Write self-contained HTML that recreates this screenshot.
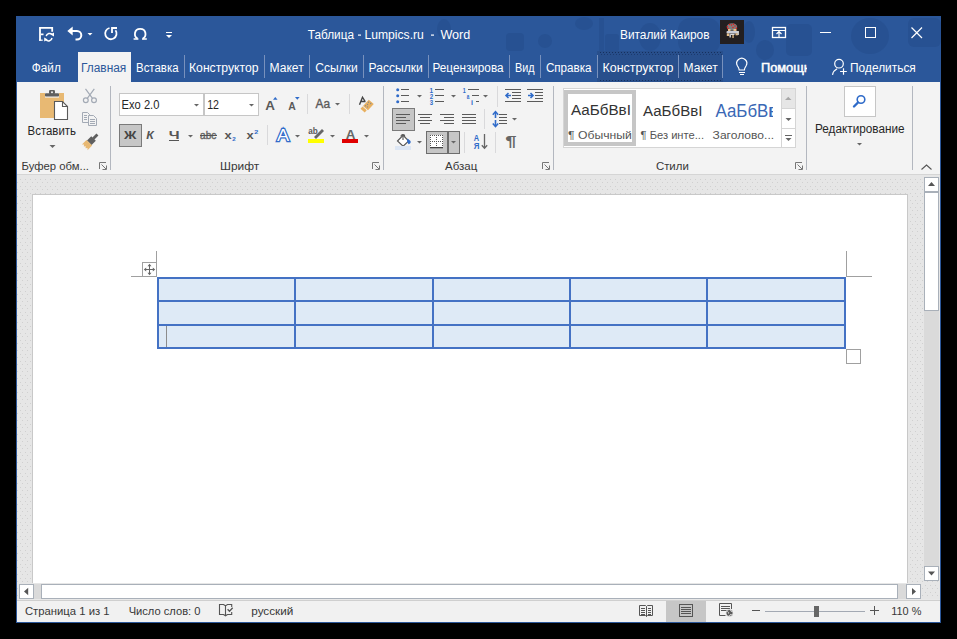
<!DOCTYPE html>
<html><head><meta charset="utf-8"><style>
html,body{margin:0;padding:0;background:#000;width:957px;height:639px;overflow:hidden}
svg{display:block;font-family:"Liberation Sans",sans-serif}
</style></head><body>
<svg width="957" height="639" viewBox="0 0 957 639">
<rect x="0" y="0" width="957" height="639" fill="#000" />
<rect x="16" y="16" width="925" height="607" fill="#2b579a" />
<g fill="#1f4580" opacity="0.3"><ellipse cx="584" cy="23.5" rx="9" ry="6.5"/><ellipse cx="444" cy="29" rx="7" ry="10"/><rect x="506" y="33" width="18" height="18" rx="4"/><circle cx="545" cy="41" r="7"/><rect x="599" y="18" width="5" height="34"/><rect x="605" y="34" width="14" height="18" rx="3"/><ellipse cx="650" cy="37" rx="11" ry="14"/><rect x="678" y="18" width="42" height="36" rx="12"/><ellipse cx="749" cy="32" rx="6" ry="11"/><ellipse cx="765" cy="50" rx="9" ry="10"/><rect x="786" y="24" width="26" height="32" rx="5"/><ellipse cx="870" cy="36" rx="19" ry="18"/><rect x="908" y="18" width="33" height="29" rx="6"/></g>
<rect x="597" y="51" width="126" height="31" fill="#284f8c" />
<rect x="600" y="52" width="1" height="1" fill="#15305e" />
<rect x="601" y="54" width="1" height="1" fill="#1c3a6e" />
<rect x="600" y="80" width="1" height="1" fill="#15305e" />
<rect x="603" y="52" width="1" height="1" fill="#15305e" />
<rect x="604" y="54" width="1" height="1" fill="#1c3a6e" />
<rect x="603" y="80" width="1" height="1" fill="#15305e" />
<rect x="606" y="52" width="1" height="1" fill="#15305e" />
<rect x="607" y="54" width="1" height="1" fill="#1c3a6e" />
<rect x="606" y="80" width="1" height="1" fill="#15305e" />
<rect x="609" y="52" width="1" height="1" fill="#15305e" />
<rect x="610" y="54" width="1" height="1" fill="#1c3a6e" />
<rect x="609" y="80" width="1" height="1" fill="#15305e" />
<rect x="612" y="52" width="1" height="1" fill="#15305e" />
<rect x="613" y="54" width="1" height="1" fill="#1c3a6e" />
<rect x="612" y="80" width="1" height="1" fill="#15305e" />
<rect x="615" y="52" width="1" height="1" fill="#15305e" />
<rect x="616" y="54" width="1" height="1" fill="#1c3a6e" />
<rect x="615" y="80" width="1" height="1" fill="#15305e" />
<rect x="618" y="52" width="1" height="1" fill="#15305e" />
<rect x="619" y="54" width="1" height="1" fill="#1c3a6e" />
<rect x="618" y="80" width="1" height="1" fill="#15305e" />
<rect x="621" y="52" width="1" height="1" fill="#15305e" />
<rect x="622" y="54" width="1" height="1" fill="#1c3a6e" />
<rect x="621" y="80" width="1" height="1" fill="#15305e" />
<rect x="624" y="52" width="1" height="1" fill="#15305e" />
<rect x="625" y="54" width="1" height="1" fill="#1c3a6e" />
<rect x="624" y="80" width="1" height="1" fill="#15305e" />
<rect x="627" y="52" width="1" height="1" fill="#15305e" />
<rect x="628" y="54" width="1" height="1" fill="#1c3a6e" />
<rect x="627" y="80" width="1" height="1" fill="#15305e" />
<rect x="630" y="52" width="1" height="1" fill="#15305e" />
<rect x="631" y="54" width="1" height="1" fill="#1c3a6e" />
<rect x="630" y="80" width="1" height="1" fill="#15305e" />
<rect x="633" y="52" width="1" height="1" fill="#15305e" />
<rect x="634" y="54" width="1" height="1" fill="#1c3a6e" />
<rect x="633" y="80" width="1" height="1" fill="#15305e" />
<rect x="636" y="52" width="1" height="1" fill="#15305e" />
<rect x="637" y="54" width="1" height="1" fill="#1c3a6e" />
<rect x="636" y="80" width="1" height="1" fill="#15305e" />
<rect x="639" y="52" width="1" height="1" fill="#15305e" />
<rect x="640" y="54" width="1" height="1" fill="#1c3a6e" />
<rect x="639" y="80" width="1" height="1" fill="#15305e" />
<rect x="642" y="52" width="1" height="1" fill="#15305e" />
<rect x="643" y="54" width="1" height="1" fill="#1c3a6e" />
<rect x="642" y="80" width="1" height="1" fill="#15305e" />
<rect x="645" y="52" width="1" height="1" fill="#15305e" />
<rect x="646" y="54" width="1" height="1" fill="#1c3a6e" />
<rect x="645" y="80" width="1" height="1" fill="#15305e" />
<rect x="648" y="52" width="1" height="1" fill="#15305e" />
<rect x="649" y="54" width="1" height="1" fill="#1c3a6e" />
<rect x="648" y="80" width="1" height="1" fill="#15305e" />
<rect x="651" y="52" width="1" height="1" fill="#15305e" />
<rect x="652" y="54" width="1" height="1" fill="#1c3a6e" />
<rect x="651" y="80" width="1" height="1" fill="#15305e" />
<rect x="654" y="52" width="1" height="1" fill="#15305e" />
<rect x="655" y="54" width="1" height="1" fill="#1c3a6e" />
<rect x="654" y="80" width="1" height="1" fill="#15305e" />
<rect x="657" y="52" width="1" height="1" fill="#15305e" />
<rect x="658" y="54" width="1" height="1" fill="#1c3a6e" />
<rect x="657" y="80" width="1" height="1" fill="#15305e" />
<rect x="660" y="52" width="1" height="1" fill="#15305e" />
<rect x="661" y="54" width="1" height="1" fill="#1c3a6e" />
<rect x="660" y="80" width="1" height="1" fill="#15305e" />
<rect x="663" y="52" width="1" height="1" fill="#15305e" />
<rect x="664" y="54" width="1" height="1" fill="#1c3a6e" />
<rect x="663" y="80" width="1" height="1" fill="#15305e" />
<rect x="666" y="52" width="1" height="1" fill="#15305e" />
<rect x="667" y="54" width="1" height="1" fill="#1c3a6e" />
<rect x="666" y="80" width="1" height="1" fill="#15305e" />
<rect x="669" y="52" width="1" height="1" fill="#15305e" />
<rect x="670" y="54" width="1" height="1" fill="#1c3a6e" />
<rect x="669" y="80" width="1" height="1" fill="#15305e" />
<rect x="672" y="52" width="1" height="1" fill="#15305e" />
<rect x="673" y="54" width="1" height="1" fill="#1c3a6e" />
<rect x="672" y="80" width="1" height="1" fill="#15305e" />
<rect x="675" y="52" width="1" height="1" fill="#15305e" />
<rect x="676" y="54" width="1" height="1" fill="#1c3a6e" />
<rect x="675" y="80" width="1" height="1" fill="#15305e" />
<rect x="678" y="52" width="1" height="1" fill="#15305e" />
<rect x="679" y="54" width="1" height="1" fill="#1c3a6e" />
<rect x="678" y="80" width="1" height="1" fill="#15305e" />
<rect x="681" y="52" width="1" height="1" fill="#15305e" />
<rect x="682" y="54" width="1" height="1" fill="#1c3a6e" />
<rect x="681" y="80" width="1" height="1" fill="#15305e" />
<rect x="684" y="52" width="1" height="1" fill="#15305e" />
<rect x="685" y="54" width="1" height="1" fill="#1c3a6e" />
<rect x="684" y="80" width="1" height="1" fill="#15305e" />
<rect x="687" y="52" width="1" height="1" fill="#15305e" />
<rect x="688" y="54" width="1" height="1" fill="#1c3a6e" />
<rect x="687" y="80" width="1" height="1" fill="#15305e" />
<rect x="690" y="52" width="1" height="1" fill="#15305e" />
<rect x="691" y="54" width="1" height="1" fill="#1c3a6e" />
<rect x="690" y="80" width="1" height="1" fill="#15305e" />
<rect x="693" y="52" width="1" height="1" fill="#15305e" />
<rect x="694" y="54" width="1" height="1" fill="#1c3a6e" />
<rect x="693" y="80" width="1" height="1" fill="#15305e" />
<rect x="696" y="52" width="1" height="1" fill="#15305e" />
<rect x="697" y="54" width="1" height="1" fill="#1c3a6e" />
<rect x="696" y="80" width="1" height="1" fill="#15305e" />
<rect x="699" y="52" width="1" height="1" fill="#15305e" />
<rect x="700" y="54" width="1" height="1" fill="#1c3a6e" />
<rect x="699" y="80" width="1" height="1" fill="#15305e" />
<rect x="702" y="52" width="1" height="1" fill="#15305e" />
<rect x="703" y="54" width="1" height="1" fill="#1c3a6e" />
<rect x="702" y="80" width="1" height="1" fill="#15305e" />
<rect x="705" y="52" width="1" height="1" fill="#15305e" />
<rect x="706" y="54" width="1" height="1" fill="#1c3a6e" />
<rect x="705" y="80" width="1" height="1" fill="#15305e" />
<rect x="708" y="52" width="1" height="1" fill="#15305e" />
<rect x="709" y="54" width="1" height="1" fill="#1c3a6e" />
<rect x="708" y="80" width="1" height="1" fill="#15305e" />
<rect x="711" y="52" width="1" height="1" fill="#15305e" />
<rect x="712" y="54" width="1" height="1" fill="#1c3a6e" />
<rect x="711" y="80" width="1" height="1" fill="#15305e" />
<rect x="714" y="52" width="1" height="1" fill="#15305e" />
<rect x="715" y="54" width="1" height="1" fill="#1c3a6e" />
<rect x="714" y="80" width="1" height="1" fill="#15305e" />
<rect x="717" y="52" width="1" height="1" fill="#15305e" />
<rect x="718" y="54" width="1" height="1" fill="#1c3a6e" />
<rect x="717" y="80" width="1" height="1" fill="#15305e" />
<rect x="720" y="52" width="1" height="1" fill="#15305e" />
<rect x="721" y="54" width="1" height="1" fill="#1c3a6e" />
<rect x="720" y="80" width="1" height="1" fill="#15305e" />
<path d="M40 40.8V27.8h12.2v4" fill="none" stroke="#fff" stroke-width="1.8"/>
<rect x="41" y="33.5" width="2.5" height="1.7" fill="#fff" />
<rect x="39" y="39.6" width="3.7" height="1.2" fill="#fff" />
<g fill="none" stroke="#fff" stroke-width="1.5"><path d="M46.2 36.2a3.5 3.5 0 0 1 6 -1.6"/><path d="M52 38a3.5 3.5 0 0 1 -6 1.8"/></g>
<path d="M50.4 34.6l3.6 -2v4z M47.8 39.6l-3.6 2v-4z" fill="#fff"/>
<path d="M71 31h6a4.3 4.3 0 0 1 0 8.6h-1.5" fill="none" stroke="#fff" stroke-width="2"/>
<path d="M67.3 31l5.4 -4.4v8.8z" fill="#fff"/>
<path d="M87.5 33h5l-2.5 2.5z" fill="#fff"/>
<path d="M109.5 28a5.7 5.7 0 1 0 6 2.2" fill="none" stroke="#fff" stroke-width="1.8"/>
<path d="M112 33V28h5" fill="none" stroke="#fff" stroke-width="1.8"/>
<path d="M137.6 38.6C133.6 36.6 133.8 28.9 140.2 28.9C146.6 28.9 146.8 36.6 142.8 38.6" fill="none" stroke="#fff" stroke-width="1.8"/><path d="M133.6 39H138.4M142 39H146.8" stroke="#fff" stroke-width="1.7"/>
<rect x="166" y="32" width="6" height="1" fill="#fff"/>
<path d="M166.0 35h6l-3.0 3.0z" fill="#fff"/>
<text x="307.74" y="39" font-size="12" fill="#fff" font-weight="normal" textLength="46.26" lengthAdjust="spacingAndGlyphs" >Таблица</text>
<rect x="358" y="34.5" width="3" height="1.2" fill="#fff" />
<text x="364.51" y="39" font-size="12" fill="#fff" font-weight="normal" textLength="59.30" lengthAdjust="spacingAndGlyphs" >Lumpics.ru</text>
<rect x="431" y="34.5" width="3" height="1.2" fill="#fff" />
<text x="440.45" y="39" font-size="12" fill="#fff" font-weight="normal" textLength="29.86" lengthAdjust="spacingAndGlyphs" >Word</text>
<text x="620.03" y="39" font-size="12" fill="#fff" font-weight="normal" textLength="89.49" lengthAdjust="spacingAndGlyphs" >Виталий Каиров</text>
<rect x="720" y="20" width="24" height="24" fill="#231f20" />
<ellipse cx="732" cy="27" rx="5.2" ry="3.8" fill="#7c7c7c"/>
<circle cx="729.5" cy="24.5" r="0.75" fill="#e81818"/>
<circle cx="731.5" cy="25" r="0.75" fill="#e81818"/>
<circle cx="733.5" cy="24.2" r="0.75" fill="#e81818"/>
<circle cx="735" cy="26" r="0.75" fill="#e81818"/>
<circle cx="733" cy="27.5" r="0.75" fill="#e81818"/>
<circle cx="727.3" cy="26.8" r="0.75" fill="#e81818"/>
<circle cx="728" cy="28.5" r="0.75" fill="#e81818"/>
<circle cx="736.5" cy="28.3" r="0.75" fill="#e81818"/>
<rect x="726.5" y="31" width="12" height="2.6" rx="1" fill="#c9ccd6"/><rect x="728" y="29" width="2.5" height="2" fill="#e8c08a"/><rect x="733.5" y="29" width="3" height="2" fill="#e8c08a"/><rect x="726.8" y="33.5" width="2.4" height="2.5" fill="#e8c08a"/><rect x="735.5" y="33.3" width="2.4" height="2" fill="#e8c08a"/><rect x="737.6" y="31" width="1.2" height="4" fill="#ddd"/>
<rect x="729.5" y="34.2" width="1.3" height="3.3" fill="#eee"/><rect x="732.4" y="35" width="1.3" height="3" fill="#e8c08a"/><rect x="730.5" y="33.8" width="4" height="1.2" fill="#ddd"/>
<rect x="772.5" y="27.5" width="13" height="10" fill="none" stroke="#fff" stroke-width="1.3"/>
<rect x="773" y="30" width="12" height="1" fill="#fff"/>
<path d="M779 37v-5M776.5 34l2.5 -2.5l2.5 2.5" fill="none" stroke="#fff" stroke-width="1.2"/>
<rect x="820" y="32" width="11" height="1" fill="#fff"/>
<rect x="865.5" y="27.5" width="10" height="10" fill="none" stroke="#fff" stroke-width="1"/>
<path d="M911.5 27.5l10.5 10.5M922 27.5l-10.5 10.5" stroke="#fff" stroke-width="1.2"/>
<rect x="78" y="52" width="53" height="30" fill="#f3f3f3" />
<text x="31.82" y="71.8" font-size="12" fill="#fff" font-weight="normal" textLength="29.00" lengthAdjust="spacingAndGlyphs" >Файл</text>
<text x="81.04" y="71.8" font-size="12" fill="#2b579a" font-weight="normal" textLength="45.27" lengthAdjust="spacingAndGlyphs" >Главная</text>
<text x="136.06" y="71.8" font-size="12" fill="#fff" font-weight="normal" textLength="42.44" lengthAdjust="spacingAndGlyphs" >Вставка</text>
<text x="189.00" y="71.8" font-size="12" fill="#fff" font-weight="normal" textLength="69.51" lengthAdjust="spacingAndGlyphs" >Конструктор</text>
<text x="269.51" y="71.8" font-size="12" fill="#fff" font-weight="normal" textLength="34.19" lengthAdjust="spacingAndGlyphs" >Макет</text>
<text x="315.39" y="71.8" font-size="12" fill="#fff" font-weight="normal" textLength="42.45" lengthAdjust="spacingAndGlyphs" >Ссылки</text>
<text x="368.51" y="71.8" font-size="12" fill="#fff" font-weight="normal" textLength="54.32" lengthAdjust="spacingAndGlyphs" >Рассылки</text>
<text x="432.55" y="71.8" font-size="12" fill="#fff" font-weight="normal" textLength="70.95" lengthAdjust="spacingAndGlyphs" >Рецензирова</text>
<text x="515.11" y="71.8" font-size="12" fill="#fff" font-weight="normal" textLength="19.57" lengthAdjust="spacingAndGlyphs" >Вид</text>
<text x="545.91" y="71.8" font-size="12" fill="#fff" font-weight="normal" textLength="45.59" lengthAdjust="spacingAndGlyphs" >Справка</text>
<text x="602.48" y="71.8" font-size="12" fill="#fff" font-weight="normal" textLength="71.04" lengthAdjust="spacingAndGlyphs" >Конструктор</text>
<text x="683.51" y="71.8" font-size="12" fill="#fff" font-weight="normal" textLength="34.19" lengthAdjust="spacingAndGlyphs" >Макет</text>
<rect x="184" y="55" width="1" height="23" fill="#7891bd"/>
<rect x="264" y="55" width="1" height="23" fill="#7891bd"/>
<rect x="309" y="55" width="1" height="23" fill="#7891bd"/>
<rect x="363" y="55" width="1" height="23" fill="#7891bd"/>
<rect x="428" y="55" width="1" height="23" fill="#7891bd"/>
<rect x="509" y="55" width="1" height="23" fill="#7891bd"/>
<rect x="540" y="55" width="1" height="23" fill="#7891bd"/>
<rect x="597" y="55" width="1" height="23" fill="#7891bd"/>
<rect x="678" y="55" width="1" height="23" fill="#7891bd"/>
<rect x="722" y="55" width="1" height="23" fill="#7891bd"/>
<path d="M737.5 66a5 5 0 1 1 8.5 0c-1 1.5 -1.6 2.3 -1.6 4h-5.2c0 -1.7 -0.7 -2.5 -1.7 -4z" fill="none" stroke="#fff" stroke-width="1.2"/>
<rect x="739" y="72" width="6" height="1" fill="#fff"/>
<rect x="740" y="74" width="4" height="1" fill="#fff"/>
<clipPath id="cph"><rect x="740" y="50" width="67" height="30"/></clipPath>
<text x="760.96" y="71.8" font-size="12" fill="#fff" font-weight="normal" textLength="62.69" lengthAdjust="spacingAndGlyphs" clip-path="url(#cph)" stroke="#fff" stroke-width="0.45">Помощник</text>
<circle cx="839" cy="63.7" r="4.3" fill="none" stroke="#fff" stroke-width="1.2"/><path d="M832.5 74.8c0.6 -2.8 2.2 -4.8 4.6 -6" fill="none" stroke="#fff" stroke-width="1.2"/><path d="M843.5 68.2v6.6M840.1 71.5h6.7" stroke="#fff" stroke-width="1.2"/>
<text x="850.04" y="71.8" font-size="12" fill="#fff" font-weight="normal" textLength="65.77" lengthAdjust="spacingAndGlyphs" >Поделиться</text>
<rect x="17" y="82" width="923" height="92" fill="#f3f3f3" />
<rect x="17" y="174" width="923" height="1" fill="#d5d5d5"/>
<rect x="110" y="86" width="1" height="84" fill="#b3b7bf"/>
<rect x="383" y="86" width="1" height="84" fill="#b3b7bf"/>
<rect x="553" y="86" width="1" height="84" fill="#b3b7bf"/>
<rect x="806" y="86" width="1" height="84" fill="#b3b7bf"/>
<rect x="912" y="86" width="1" height="84" fill="#b3b7bf"/>
<rect x="40" y="93" width="24" height="25" fill="#e8b973"/><rect x="45" y="93" width="14" height="4.6" fill="#f3f3f3"/>
<rect x="45" y="93.2" width="14" height="3.4" rx="0.8" fill="#5f5f5f"/><rect x="49" y="90" width="6" height="4" rx="1.2" fill="#5f5f5f"/><circle cx="52" cy="92.3" r="1" fill="#f0f0f0"/>
<path d="M54.5 101.5h8l5 5v13h-13z" fill="#fff" stroke="#5a5a5a" stroke-width="1.1"/><path d="M62.5 101.5v5h5" fill="none" stroke="#5a5a5a" stroke-width="1.1"/>
<text x="27.57" y="135" font-size="12" fill="#262626" font-weight="normal" textLength="48.40" lengthAdjust="spacingAndGlyphs" >Вставить</text>
<path d="M49.5 145h6l-3.0 3.0z" fill="#666666"/>
<g fill="none" stroke="#a3aab5" stroke-width="1.2"><circle cx="85.8" cy="100.3" r="2.4"/><circle cx="94" cy="100.3" r="2.4"/><path d="M87.3 98.3L94.3 88.8M92.5 98.3L85.5 88.8"/></g>
<g fill="#f3f3f3" stroke="#a3aab5" stroke-width="1"><path d="M82.5 112.5h5l2 2v8h-7z"/><path d="M88.5 115.5h5l3 3v7h-8z"/></g>
<rect x="84" y="115" width="3" height="1" fill="#a3aab5"/>
<rect x="84" y="117" width="3" height="1" fill="#a3aab5"/>
<rect x="84" y="119" width="3" height="1" fill="#a3aab5"/>
<rect x="90" y="119" width="5" height="1" fill="#a3aab5"/>
<rect x="90" y="121" width="5" height="1" fill="#a3aab5"/>
<rect x="90" y="123" width="5" height="1" fill="#a3aab5"/>
<g transform="rotate(45 90 142)"><rect x="88.6" y="131.5" width="2.8" height="6" fill="#5f5f5f"/><rect x="86.8" y="137" width="6.4" height="6" fill="#5f5f5f"/><path d="M86 143h8v6.5l-1.5 -1.5l-1.3 1.5l-1.2 -1.5l-1.2 1.5l-1.3 -1.5l-1.5 1.5z" fill="#e8b973"/></g>
<text x="21.58" y="170" font-size="11.5" fill="#383838" font-weight="normal" textLength="67.44" lengthAdjust="spacingAndGlyphs" >Буфер обм...</text>
<path d="M99.5 169v-6.5h6.5" fill="none" stroke="#777" stroke-width="1"/><path d="M101.5 164.5l4.5 4.5M106.5 165.5v4h-4" fill="none" stroke="#777" stroke-width="1"/>
<rect x="119.5" y="93.5" width="84" height="22" fill="#fff" stroke="#c6c6c6" stroke-width="1"/>
<rect x="204.5" y="93.5" width="54" height="22" fill="#fff" stroke="#c6c6c6" stroke-width="1"/>
<text x="121.58" y="109" font-size="12.5" fill="#262626" font-weight="normal" textLength="37.85" lengthAdjust="spacingAndGlyphs" >Exo 2.0</text>
<path d="M194.0 104h5l-2.5 2.5z" fill="#666666"/>
<text x="207.19" y="109" font-size="12.5" fill="#262626" font-weight="normal" textLength="11.85" lengthAdjust="spacingAndGlyphs" >12</text>
<path d="M249.0 104h5l-2.5 2.5z" fill="#666666"/>
<text x="265.17" y="110" font-size="13" fill="#595959" font-weight="bold" textLength="9.69" lengthAdjust="spacingAndGlyphs" >A</text>
<path d="M273 99.7l2.3 -2.7l2.3 2.7z" fill="#2f6bc9"/>
<text x="288.24" y="110" font-size="10.5" fill="#595959" font-weight="bold" textLength="7.53" lengthAdjust="spacingAndGlyphs" >A</text>
<path d="M295 97h4.6l-2.3 2.8z" fill="#2f6bc9"/>
<rect x="307" y="94" width="1" height="20" fill="#d9d9db"/>
<text x="315.48" y="107.5" font-size="12" fill="#595959" font-weight="normal" textLength="14.52" lengthAdjust="spacingAndGlyphs" stroke="#595959" stroke-width="0.35">Aa</text>
<path d="M335.0 103h5l-2.5 2.5z" fill="#666666"/>
<rect x="349" y="94" width="1" height="20" fill="#d9d9db"/>
<path d="M359.5 104.8L362.5 97.2L365.2 101.5M360.8 101.5H365.5" fill="none" stroke="#444" stroke-width="1.4"/>
<path d="M363 106l5.8 -6.3l5 4.3l-5.8 6.3z M360.5 108.8l2 -2.2l4.2 3.6l-2 2.2z" fill="#e8b060"/>
<circle cx="368.5" cy="102.3" r="0.7" fill="#8a8a8a"/>
<circle cx="370.7" cy="103.5" r="0.7" fill="#8a8a8a"/>
<circle cx="367.5" cy="104.5" r="0.7" fill="#8a8a8a"/>
<circle cx="365.5" cy="105.8" r="0.7" fill="#8a8a8a"/>
<circle cx="367.5" cy="106.9" r="0.7" fill="#8a8a8a"/>
<rect x="119.5" y="124.5" width="22" height="22" fill="#c6c6c6" stroke="#7a7a7a" stroke-width="1"/>
<text x="124.04" y="138.5" font-size="11" fill="#444" font-weight="bold" textLength="12.39" lengthAdjust="spacingAndGlyphs" >Ж</text>
<text x="146.29" y="138.5" font-size="11" fill="#555" font-weight="bold" textLength="7.52" lengthAdjust="spacingAndGlyphs" font-style="italic">К</text>
<text x="168.67" y="138.5" font-size="11" fill="#555" font-weight="bold" textLength="10.87" lengthAdjust="spacingAndGlyphs" >Ч</text>
<rect x="169" y="140" width="10" height="1" fill="#555"/>
<path d="M188.0 135h5l-2.5 2.5z" fill="#666666"/>
<text x="200.07" y="138.5" font-size="10.5" fill="#666" font-weight="normal" textLength="16.19" lengthAdjust="spacingAndGlyphs" stroke="#666" stroke-width="0.4">abc</text>
<rect x="200" y="135" width="17" height="1" fill="#555"/>
<text x="224.41" y="138.5" font-size="11" fill="#555" font-weight="bold" textLength="7.18" lengthAdjust="spacingAndGlyphs" >x</text>
<text x="232.28" y="141" font-size="6" fill="#2f6bc9" font-weight="bold" textLength="3.47" lengthAdjust="spacingAndGlyphs" >2</text>
<text x="246.41" y="138.5" font-size="11" fill="#555" font-weight="bold" textLength="7.18" lengthAdjust="spacingAndGlyphs" >x</text>
<text x="254.25" y="134" font-size="6" fill="#2f6bc9" font-weight="bold" textLength="4.04" lengthAdjust="spacingAndGlyphs" >2</text>
<rect x="267" y="125" width="1" height="20" fill="#d9d9db"/>
<text x="276.96" y="140.5" font-size="17" fill="#fff" font-weight="normal" textLength="12.07" lengthAdjust="spacingAndGlyphs" stroke="#2f6bc9" stroke-width="2.4" paint-order="stroke">A</text>
<path d="M295.0 135h5l-2.5 2.5z" fill="#666666"/>
<text x="308.26" y="134" font-size="8.5" fill="#5a5a5a" font-weight="bold" textLength="9.58" lengthAdjust="spacingAndGlyphs" >ab</text>
<path d="M314 137l8 -8l2 2l-8 8z" fill="#666"/>
<rect x="308" y="139" width="16" height="4" fill="#ffff00" />
<path d="M330.0 135h5l-2.5 2.5z" fill="#666666"/>
<text x="345.67" y="138.5" font-size="12" fill="#666" font-weight="bold" textLength="9.69" lengthAdjust="spacingAndGlyphs" >A</text>
<rect x="342" y="139" width="16" height="4" fill="#e00000" />
<path d="M364.0 135h5l-2.5 2.5z" fill="#666666"/>
<text x="220.03" y="170" font-size="11.5" fill="#383838" font-weight="normal" textLength="39.17" lengthAdjust="spacingAndGlyphs" >Шрифт</text>
<path d="M372.5 169v-6.5h6.5" fill="none" stroke="#777" stroke-width="1"/><path d="M374.5 164.5l4.5 4.5M379.5 165.5v4h-4" fill="none" stroke="#777" stroke-width="1"/>
<circle cx="397.7" cy="89.7" r="1.5" fill="#2f6bc9"/>
<rect x="401" y="89" width="8" height="1" fill="#5a5a5a"/>
<circle cx="397.7" cy="95.7" r="1.5" fill="#2f6bc9"/>
<rect x="401" y="95" width="8" height="1" fill="#5a5a5a"/>
<circle cx="397.7" cy="101.7" r="1.5" fill="#2f6bc9"/>
<rect x="401" y="101" width="8" height="1" fill="#5a5a5a"/>
<path d="M417.0 95h5l-2.5 2.5z" fill="#666666"/>
<text x="429.59" y="92.5" font-size="6.5" fill="#2f6bc9" font-weight="bold" textLength="3.59" lengthAdjust="spacingAndGlyphs" >1</text>
<rect x="435" y="89" width="9" height="1" fill="#5a5a5a"/>
<text x="429.78" y="98.5" font-size="6.5" fill="#2f6bc9" font-weight="bold" textLength="3.47" lengthAdjust="spacingAndGlyphs" >2</text>
<rect x="435" y="95" width="9" height="1" fill="#5a5a5a"/>
<text x="429.86" y="104.5" font-size="6.5" fill="#2f6bc9" font-weight="bold" textLength="3.36" lengthAdjust="spacingAndGlyphs" >3</text>
<rect x="435" y="101" width="9" height="1" fill="#5a5a5a"/>
<path d="M451.0 95h5l-2.5 2.5z" fill="#666666"/>
<text x="462.66" y="92.5" font-size="6.5" fill="#2f6bc9" font-weight="bold" textLength="2.99" lengthAdjust="spacingAndGlyphs" >1</text>
<rect x="468" y="89" width="11" height="1" fill="#5a5a5a"/>
<text x="466.86" y="98.5" font-size="6.5" fill="#2f6bc9" font-weight="bold" textLength="2.61" lengthAdjust="spacingAndGlyphs" >a</text>
<rect x="472" y="95" width="7" height="1" fill="#5a5a5a"/>
<text x="470.99" y="104.5" font-size="6.5" fill="#2f6bc9" font-weight="bold" textLength="2.02" lengthAdjust="spacingAndGlyphs" >i</text>
<rect x="476" y="101" width="3" height="1" fill="#5a5a5a"/>
<path d="M483.0 95h5l-2.5 2.5z" fill="#666666"/>
<rect x="497" y="86" width="1" height="21" fill="#d9d9db"/>
<rect x="505" y="89" width="16" height="1" fill="#5a5a5a"/>
<rect x="505" y="101" width="16" height="1" fill="#5a5a5a"/>
<rect x="512" y="92" width="9" height="1" fill="#5a5a5a"/>
<rect x="512" y="95" width="9" height="1" fill="#5a5a5a"/>
<rect x="512" y="98" width="9" height="1" fill="#5a5a5a"/>
<rect x="527" y="89" width="16" height="1" fill="#5a5a5a"/>
<rect x="527" y="101" width="16" height="1" fill="#5a5a5a"/>
<rect x="535" y="92" width="8" height="1" fill="#5a5a5a"/>
<rect x="535" y="95" width="8" height="1" fill="#5a5a5a"/>
<rect x="535" y="98" width="8" height="1" fill="#5a5a5a"/>
<path d="M506 95.5h5M508.5 93l-2.5 2.5l2.5 2.5" fill="none" stroke="#2f6bc9" stroke-width="1.6"/>
<path d="M528 95.5h5M530.5 93l2.5 2.5l-2.5 2.5" fill="none" stroke="#2f6bc9" stroke-width="1.6"/>
<rect x="392.5" y="108.5" width="22" height="22" fill="#c6c6c6" stroke="#7a7a7a" stroke-width="1"/>
<rect x="396" y="114" width="14" height="1" fill="#5a5a5a"/>
<rect x="396" y="117" width="10" height="1" fill="#5a5a5a"/>
<rect x="396" y="120" width="14" height="1" fill="#5a5a5a"/>
<rect x="396" y="123" width="10" height="1" fill="#5a5a5a"/>
<rect x="418" y="114" width="14" height="1" fill="#5a5a5a"/>
<rect x="420" y="117" width="10" height="1" fill="#5a5a5a"/>
<rect x="418" y="120" width="14" height="1" fill="#5a5a5a"/>
<rect x="420" y="123" width="10" height="1" fill="#5a5a5a"/>
<rect x="440" y="114" width="14" height="1" fill="#5a5a5a"/>
<rect x="444" y="117" width="10" height="1" fill="#5a5a5a"/>
<rect x="440" y="120" width="14" height="1" fill="#5a5a5a"/>
<rect x="444" y="123" width="10" height="1" fill="#5a5a5a"/>
<rect x="462" y="114" width="14" height="1" fill="#5a5a5a"/>
<rect x="462" y="117" width="14" height="1" fill="#5a5a5a"/>
<rect x="462" y="120" width="14" height="1" fill="#5a5a5a"/>
<rect x="462" y="123" width="14" height="1" fill="#5a5a5a"/>
<rect x="484" y="109" width="1" height="20" fill="#d9d9db"/>
<path d="M495.5 112v6M495.5 120v6" fill="none" stroke="#2f6bc9" stroke-width="1.6"/><path d="M492.8 114.8l2.7 -3.2l2.7 3.2M492.8 123.4l2.7 3.2l2.7 -3.2" fill="none" stroke="#2f6bc9" stroke-width="1.5"/>
<rect x="499" y="114" width="8" height="1" fill="#5a5a5a"/>
<rect x="499" y="117" width="8" height="1" fill="#5a5a5a"/>
<rect x="499" y="120" width="8" height="1" fill="#5a5a5a"/>
<rect x="499" y="123" width="8" height="1" fill="#5a5a5a"/>
<path d="M512.0 118h5l-2.5 2.5z" fill="#666666"/>
<path d="M397.5 141l5.6 -5.6l5.6 5.6l-5.6 5.2z" fill="#fff" stroke="#555" stroke-width="1.1"/><path d="M401 136.5a1.9 1.9 0 0 1 3.8 0M403 135v5" fill="none" stroke="#555" stroke-width="1.1"/><path d="M407.5 138.5l3 2.5c0.6 1.6 -0.3 3 -2 3.2l-1.5 -3z" fill="#2f6bc9"/>
<rect x="395" y="146" width="16" height="4" fill="#dce6f4" />
<path d="M417.0 141h5l-2.5 2.5z" fill="#666666"/>
<rect x="426.5" y="131.5" width="33" height="22" fill="#c6c6c6" stroke="#6d6d6d" stroke-width="1"/>
<rect x="447" y="131" width="2" height="23" fill="#6d6d6d"/>
<rect x="430" y="135" width="13" height="13" fill="#fff"/>
<rect x="430" y="135" width="1" height="1" fill="#555" />
<rect x="430" y="135" width="1" height="1" fill="#555" />
<rect x="442" y="135" width="1" height="1" fill="#555" />
<rect x="436" y="135" width="1" height="1" fill="#555" />
<rect x="430" y="141" width="1" height="1" fill="#555" />
<rect x="432" y="135" width="1" height="1" fill="#555" />
<rect x="430" y="137" width="1" height="1" fill="#555" />
<rect x="442" y="137" width="1" height="1" fill="#555" />
<rect x="436" y="137" width="1" height="1" fill="#555" />
<rect x="432" y="141" width="1" height="1" fill="#555" />
<rect x="434" y="135" width="1" height="1" fill="#555" />
<rect x="430" y="139" width="1" height="1" fill="#555" />
<rect x="442" y="139" width="1" height="1" fill="#555" />
<rect x="436" y="139" width="1" height="1" fill="#555" />
<rect x="434" y="141" width="1" height="1" fill="#555" />
<rect x="436" y="135" width="1" height="1" fill="#555" />
<rect x="430" y="141" width="1" height="1" fill="#555" />
<rect x="442" y="141" width="1" height="1" fill="#555" />
<rect x="436" y="141" width="1" height="1" fill="#555" />
<rect x="436" y="141" width="1" height="1" fill="#555" />
<rect x="438" y="135" width="1" height="1" fill="#555" />
<rect x="430" y="143" width="1" height="1" fill="#555" />
<rect x="442" y="143" width="1" height="1" fill="#555" />
<rect x="436" y="143" width="1" height="1" fill="#555" />
<rect x="438" y="141" width="1" height="1" fill="#555" />
<rect x="440" y="135" width="1" height="1" fill="#555" />
<rect x="430" y="145" width="1" height="1" fill="#555" />
<rect x="442" y="145" width="1" height="1" fill="#555" />
<rect x="436" y="145" width="1" height="1" fill="#555" />
<rect x="440" y="141" width="1" height="1" fill="#555" />
<rect x="442" y="135" width="1" height="1" fill="#555" />
<rect x="430" y="147" width="1" height="1" fill="#555" />
<rect x="442" y="147" width="1" height="1" fill="#555" />
<rect x="436" y="147" width="1" height="1" fill="#555" />
<rect x="442" y="141" width="1" height="1" fill="#555" />
<rect x="430" y="147" width="13" height="1.3" fill="#444"/>
<path d="M451.0 141h5l-2.5 2.5z" fill="#666666"/>
<rect x="464" y="132" width="1" height="21" fill="#d9d9db"/>
<text x="473.81" y="140.5" font-size="8.5" fill="#2f6bc9" font-weight="bold" textLength="5.38" lengthAdjust="spacingAndGlyphs" >А</text>
<text x="473.87" y="149" font-size="8.5" fill="#2f6bc9" font-weight="bold" textLength="5.66" lengthAdjust="spacingAndGlyphs" >Я</text>
<path d="M484.5 134v14.5M481.8 145.2l2.7 3l2.7 -3" fill="none" stroke="#666" stroke-width="1.3"/>
<rect x="495" y="132" width="1" height="21" fill="#d9d9db"/>
<text x="505.29" y="146" font-size="14" fill="#666" font-weight="bold" textLength="11.39" lengthAdjust="spacingAndGlyphs" >¶</text>
<text x="444.98" y="170" font-size="11.5" fill="#383838" font-weight="normal" textLength="32.28" lengthAdjust="spacingAndGlyphs" >Абзац</text>
<path d="M542.5 169v-6.5h6.5" fill="none" stroke="#777" stroke-width="1"/><path d="M544.5 164.5l4.5 4.5M549.5 165.5v4h-4" fill="none" stroke="#777" stroke-width="1"/>
<rect x="563.5" y="88.5" width="232" height="59" fill="#fff" stroke="#d5d5d5" stroke-width="1"/>
<rect x="564.5" y="90.5" width="71" height="55" fill="none" stroke="#c6c6c6" stroke-width="0"/>
<rect x="566" y="92" width="68" height="52" fill="none" stroke="#c6c6c6" stroke-width="4"/>
<text x="570.97" y="115" font-size="14" fill="#333" font-weight="normal" textLength="59.94" lengthAdjust="spacingAndGlyphs" >АаБбВвI</text>
<text x="568.02" y="139" font-size="11.5" fill="#555" font-weight="normal" textLength="63.82" lengthAdjust="spacingAndGlyphs" >¶ Обычный</text>
<text x="642.97" y="115.5" font-size="14" fill="#333" font-weight="normal" textLength="59.43" lengthAdjust="spacingAndGlyphs" >АаБбВвI</text>
<text x="640.57" y="139" font-size="11.5" fill="#555" font-weight="normal" textLength="63.45" lengthAdjust="spacingAndGlyphs" >¶ Без инте...</text>
<clipPath id="cphd"><rect x="712" y="95" width="61" height="30"/></clipPath>
<text x="715.47" y="117" font-size="17.5" fill="#3a68b5" font-weight="normal" textLength="52.93" lengthAdjust="spacingAndGlyphs" >АаБбВ</text>
<text x="767.84" y="117" font-size="17.5" fill="#3a68b5" font-weight="normal" textLength="12.70" lengthAdjust="spacingAndGlyphs" clip-path="url(#cphd)">в</text>
<text x="712.61" y="139" font-size="11.5" fill="#555" font-weight="normal" textLength="61.48" lengthAdjust="spacingAndGlyphs" >Заголово...</text>
<rect x="781" y="89" width="14" height="58" fill="#fff" />
<rect x="781" y="88" width="1" height="60" fill="#d5d5d5"/>
<rect x="782" y="89" width="13" height="20" fill="#e6e6e6" />
<path d="M785 100h6.5l-3.25 -3.2z" fill="#a8a8a8"/>
<rect x="781" y="108" width="15" height="1" fill="#d5d5d5"/>
<rect x="781" y="128" width="15" height="1" fill="#d5d5d5"/>
<path d="M785.5 118h6l-3.0 3.0z" fill="#666666"/>
<rect x="785" y="135" width="7" height="1" fill="#666"/>
<path d="M785.5 138h6l-3.0 3.0z" fill="#666666"/>
<text x="655.92" y="170" font-size="11.5" fill="#383838" font-weight="normal" textLength="32.87" lengthAdjust="spacingAndGlyphs" >Стили</text>
<path d="M795.5 169v-6.5h6.5" fill="none" stroke="#777" stroke-width="1"/><path d="M797.5 164.5l4.5 4.5M802.5 165.5v4h-4" fill="none" stroke="#777" stroke-width="1"/>
<rect x="844.5" y="86.5" width="31" height="30" fill="#fff" stroke="#c6c6c6" stroke-width="1"/>
<circle cx="861" cy="99.5" r="3.8" fill="none" stroke="#2f6bc9" stroke-width="1.6"/><path d="M858 102.5l-4 4" stroke="#2f6bc9" stroke-width="2.4" stroke-linecap="round"/>
<text x="815.04" y="133" font-size="12" fill="#262626" font-weight="normal" textLength="89.47" lengthAdjust="spacingAndGlyphs" >Редактирование</text>
<path d="M857.0 143h5l-2.5 2.5z" fill="#666666"/>
<path d="M921.5 169.5l5 -4.5l5 4.5" fill="none" stroke="#555" stroke-width="1.1"/>
<defs><pattern id="dots" x="0" y="0" width="5" height="7" patternUnits="userSpaceOnUse"><rect width="5" height="7" fill="#e6e6e6"/><rect x="0" y="4" width="1" height="1" fill="#d0d0d0"/><rect x="2" y="0" width="1" height="1" fill="#d0d0d0"/></pattern></defs>
<rect x="17" y="175" width="923" height="425" fill="url(#dots)" />
<rect x="17" y="175" width="923" height="2" fill="#e6e6e6" />
<rect x="32" y="194" width="876" height="389" fill="#c8c8c8" />
<rect x="33" y="195" width="874" height="388" fill="#fff" />
<rect x="157" y="277" width="689" height="72" fill="#4472c4" />
<rect x="159" y="279" width="135" height="21" fill="#deeaf6" />
<rect x="159" y="302" width="135" height="22" fill="#deeaf6" />
<rect x="159" y="326" width="135" height="21" fill="#deeaf6" />
<rect x="296" y="279" width="136" height="21" fill="#deeaf6" />
<rect x="296" y="302" width="136" height="22" fill="#deeaf6" />
<rect x="296" y="326" width="136" height="21" fill="#deeaf6" />
<rect x="434" y="279" width="135" height="21" fill="#deeaf6" />
<rect x="434" y="302" width="135" height="22" fill="#deeaf6" />
<rect x="434" y="326" width="135" height="21" fill="#deeaf6" />
<rect x="571" y="279" width="135" height="21" fill="#deeaf6" />
<rect x="571" y="302" width="135" height="22" fill="#deeaf6" />
<rect x="571" y="326" width="135" height="21" fill="#deeaf6" />
<rect x="708" y="279" width="136" height="21" fill="#deeaf6" />
<rect x="708" y="302" width="136" height="22" fill="#deeaf6" />
<rect x="708" y="326" width="136" height="21" fill="#deeaf6" />
<rect x="166" y="326" width="1" height="21" fill="#8c8c8c"/>
<rect x="142.5" y="262.5" width="14" height="14" fill="#fff" stroke="#a0a0a0" stroke-width="1"/>
<path d="M149.5 265.5v8M145.5 269.5h8" stroke="#666" stroke-width="1"/><path d="M149.5 263.8l-2 2.4h4zM149.5 275.2l-2 -2.4h4zM143.8 269.5l2.4 -2v4zM155.2 269.5l-2.4 -2v4z" fill="#666"/>
<rect x="156" y="251" width="1" height="11" fill="#a0a0a0"/>
<rect x="131" y="276" width="11" height="1" fill="#a0a0a0"/>
<rect x="846" y="251" width="1" height="26" fill="#a0a0a0"/>
<rect x="846" y="276" width="26" height="1" fill="#a0a0a0"/>
<rect x="846.5" y="349.5" width="14" height="14" fill="#fff" stroke="#a0a0a0" stroke-width="1"/>
<rect x="924" y="191" width="15" height="375" fill="#dadada" />
<rect x="924.5" y="177.5" width="14" height="14" fill="#fff" stroke="#a9b0b9" stroke-width="1"/>
<path d="M928 186h7l-3.5 -4z" fill="#555"/>
<rect x="924.5" y="192.5" width="14" height="118" fill="#fff" stroke="#a9b0b9" stroke-width="1"/>
<rect x="924.5" y="566.5" width="14" height="14" fill="#fff" stroke="#a9b0b9" stroke-width="1"/>
<path d="M928 571.5h7l-3.5 4z" fill="#555"/>
<rect x="19" y="584" width="902" height="15" fill="#dadada" />
<rect x="19.5" y="584.5" width="14" height="14" fill="#fff" stroke="#a9b0b9" stroke-width="1"/>
<path d="M24 591.5l4.2 -3.7v7.4z" fill="#555"/>
<rect x="41.5" y="584.5" width="856" height="14" fill="#fff" stroke="#a9b0b9" stroke-width="1"/>
<rect x="906.5" y="584.5" width="14" height="14" fill="#fff" stroke="#a9b0b9" stroke-width="1"/>
<path d="M916 591.5l-4 -3.5v7z" fill="#555"/>
<rect x="17" y="599" width="923" height="1" fill="#e8e8e8"/>
<rect x="17" y="600" width="923" height="1" fill="#cfcfcf"/>
<rect x="17" y="601" width="923" height="21" fill="#f1f1f1" />
<text x="24.93" y="615" font-size="11.5" fill="#383838" font-weight="normal" textLength="84.62" lengthAdjust="spacingAndGlyphs" >Страница 1 из 1</text>
<text x="128.63" y="615" font-size="11.5" fill="#383838" font-weight="normal" textLength="71.81" lengthAdjust="spacingAndGlyphs" >Число слов: 0</text>
<path d="M225.5 605.8l-2 -1.3h-4v10h4l2 1.3l2 -1.3h4.2v-2.5M231.7 607v-2.5h-4.2l-2 1.3v10.5" fill="none" stroke="#555" stroke-width="1.1"/><path d="M227.6 609.3l1.9 1.9l3.2 -3.4" fill="none" stroke="#555" stroke-width="1.3"/>
<text x="251.25" y="615" font-size="11.5" fill="#383838" font-weight="normal" textLength="42.06" lengthAdjust="spacingAndGlyphs" >русский</text>
<rect x="666" y="601" width="40" height="21" fill="#c6c6c6" />
<path d="M639.5 605.5h6l1 1l1 -1h5v10h-5l-1 1l-1 -1h-6z M646.5 606.5v10" fill="none" stroke="#555"/>
<rect x="641" y="608" width="4" height="1" fill="#555"/>
<rect x="648" y="608" width="3" height="1" fill="#555"/>
<rect x="641" y="610" width="4" height="1" fill="#555"/>
<rect x="648" y="610" width="3" height="1" fill="#555"/>
<rect x="641" y="612" width="4" height="1" fill="#555"/>
<rect x="648" y="612" width="3" height="1" fill="#555"/>
<rect x="641" y="614" width="4" height="1" fill="#555"/>
<rect x="648" y="614" width="3" height="1" fill="#555"/>
<rect x="679.5" y="604.5" width="13" height="12" fill="none" stroke="#555" stroke-width="1"/>
<rect x="681" y="607" width="10" height="1" fill="#555"/>
<rect x="681" y="609" width="10" height="1" fill="#555"/>
<rect x="681" y="611" width="10" height="1" fill="#555"/>
<rect x="681" y="613" width="10" height="1" fill="#555"/>
<path d="M731.5 609v-5.5h-12v12h6" fill="none" stroke="#555"/>
<rect x="721" y="606" width="9" height="1" fill="#555"/>
<rect x="721" y="608" width="9" height="1" fill="#555"/>
<rect x="721" y="610" width="9" height="1" fill="#555"/>
<circle cx="729.5" cy="613" r="3.6" fill="#5a5a5a" stroke="#f1f1f1" stroke-width="0.8"/><path d="M727.3 611.5c1 0.3 1.5 1 1.2 2M729.5 616c0 -1.2 1 -1.8 2.2 -1.5M730.5 610.2c0 0.8 0.5 1.3 1.5 1.3" fill="none" stroke="#f1f1f1" stroke-width="0.9"/>
<rect x="752" y="610" width="8" height="1" fill="#555"/>
<rect x="765" y="611" width="100" height="1" fill="#a3a9b3"/>
<rect x="814" y="606" width="5" height="11" fill="#666" />
<rect x="870" y="610" width="9" height="1" fill="#555"/>
<rect x="874" y="606" width="1" height="9" fill="#555"/>
<text x="891.19" y="615" font-size="11.5" fill="#383838" font-weight="normal" textLength="30.19" lengthAdjust="spacingAndGlyphs" >110 %</text>
</svg>
</body></html>
